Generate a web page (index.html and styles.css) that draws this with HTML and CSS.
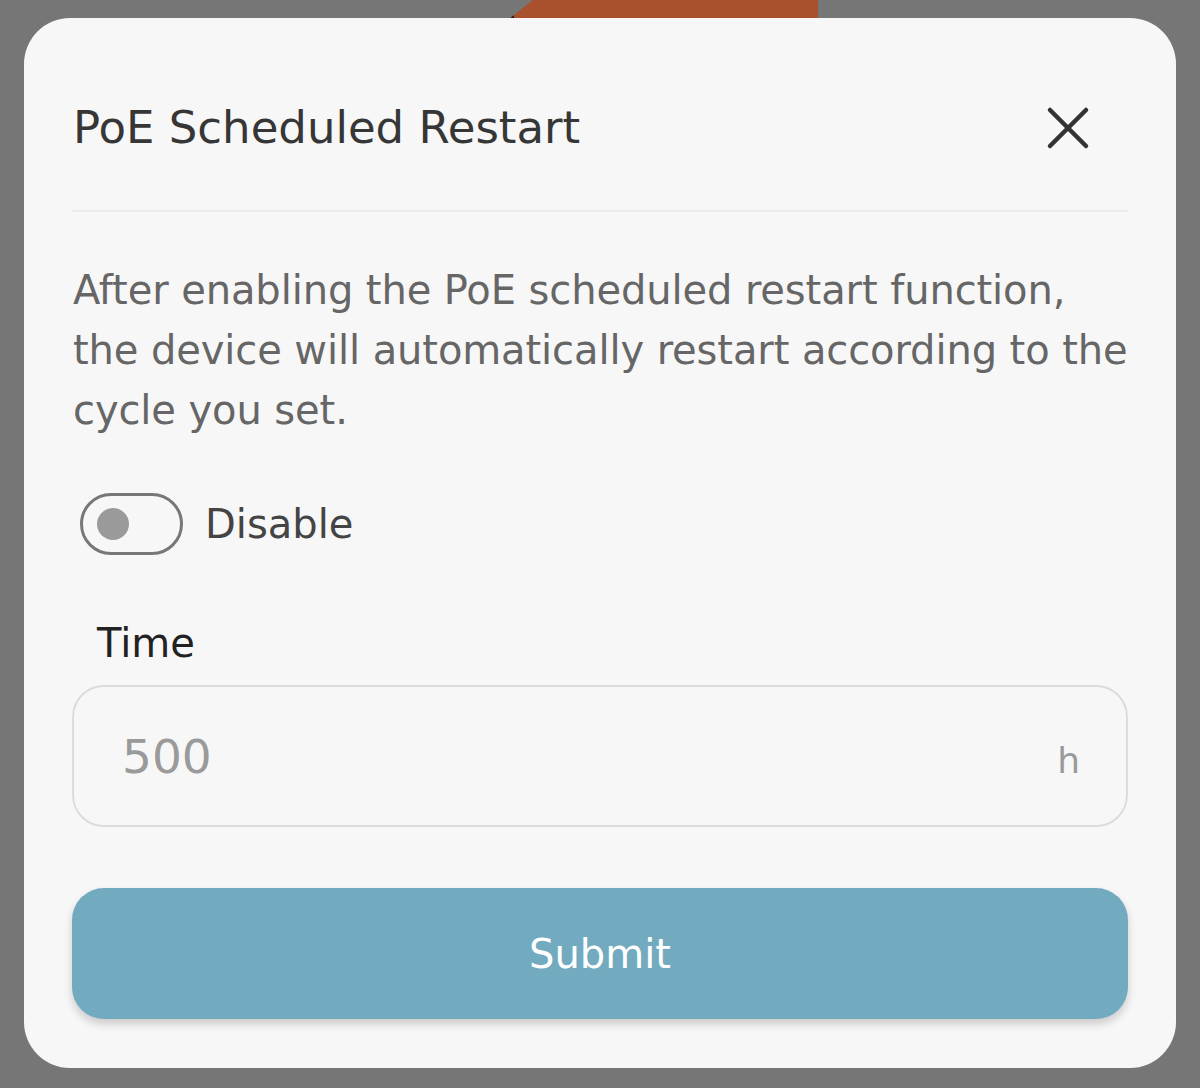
FILE: index.html
```
<!DOCTYPE html>
<html lang="en">
<head>
<meta charset="utf-8">
<title>PoE Scheduled Restart</title>
<link rel="stylesheet" href="styles.css">
</head>
<body>
<div class="backdrop-card"></div>
<div class="modal">
  <div class="modal-head">
    <span class="modal-title">PoE Scheduled Restart</span>
    <svg class="close" width="44" height="44" viewBox="0 0 44 44">
      <path d="M4 4 L40 40 M40 4 L4 40" stroke="#333" stroke-width="4.5" stroke-linecap="round" fill="none"/>
    </svg>
  </div>
  <p class="desc">After enabling the PoE scheduled restart function, the device will automatically restart according to the cycle you set.</p>
  <div class="switch-row">
    <span class="switch"><span class="knob"></span></span>
    <span class="switch-label">Disable</span>
  </div>
  <div class="field-label">Time</div>
  <div class="field">
    <span class="field-value">500</span>
    <span class="field-unit">h</span>
  </div>
  <div class="submit">Submit</div>
</div>
</body>
</html>
```
FILE: styles.css
```
* { box-sizing: border-box; }
body {
  margin: 0; background: #767676;
  font-family: "DejaVu Sans", "Noto Sans", sans-serif;
  padding: 18px 24px 0;
}

.backdrop-card {
  position: absolute; left: 508px; top: 0; width: 310px; height: 20px;
  background: #a9502c;
  clip-path: polygon(0 100%, 8% 0, 100% 0, 100% 100%);
  border-left: 6px solid #1e1e1e;
}

.modal {
  position: relative;
  width: 1152px; height: 1050px;
  background: #f7f7f7;
  border-radius: 46px;
  padding: 0 48px;
  display: flex; flex-direction: column;
}

.modal-head {
  display: flex; align-items: center; justify-content: space-between;
  padding: 86px 0 58px;
  border-bottom: 2px solid #ececec;
}
.modal-title { font-size: 45px; line-height: 48px; color: #363636; padding-left: 1px; }
.close { margin-right: 38px; }

.desc {
  margin: 48px -10px 0 1px;
  font-size: 40px; line-height: 60px; color: #666;
  letter-spacing: -0.1px;
}

.switch-row { display: flex; align-items: center; margin: 53px 0 0 8px; }
.switch {
  width: 103px; height: 62px; border: 3px solid #777; border-radius: 31px;
  display: flex; align-items: center; padding-left: 14px;
}
.knob { width: 32px; height: 32px; border-radius: 50%; background: #9a9a9a; }
.switch-label { margin-left: 22px; font-size: 40px; color: #444; }

.field-label {
  margin: 64px 0 0 25px;
  font-size: 40px; line-height: 48px; color: #222;
}
.field {
  margin-top: 18px; height: 142px;
  border: 2px solid #dcdcdc; border-radius: 32px;
  display: flex; align-items: center; justify-content: space-between;
  padding: 0 46px 0 48px;
  color: #9a9a9a;
}
.field-value { font-size: 47px; }
.field-unit { font-size: 36px; margin-top: 8px; }

.submit {
  margin-top: 61px; height: 131px;
  background: #72abbf; border-radius: 32px;
  box-shadow: 0 5px 8px rgba(0, 0, 0, 0.18);
  display: flex; align-items: center; justify-content: center;
  color: #fff; font-size: 40px;
}
```
